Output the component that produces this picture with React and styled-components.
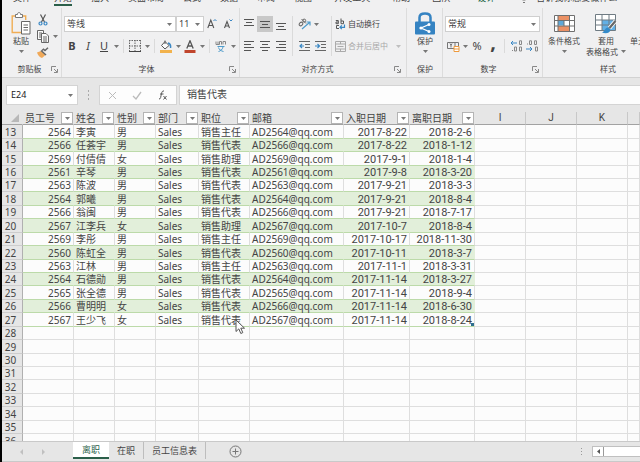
import React from "react";
import styled, { createGlobalStyle } from "styled-components";

const GlobalStyle = createGlobalStyle`
  * { box-sizing: border-box; }
  body {
    margin: 0;
    background: #e6e6e6;
    color: #444;
    font: 9px/12px "Noto Sans", "Noto Sans CJK SC", sans-serif;
  }
  button, input, select {
    font: inherit;
    color: inherit;
    border: 0;
    padding: 0;
    margin: 0;
    background: none;
  }
  svg { display: block; }
`;

const Window = styled.div`
  display: flex;
  flex-direction: column;
  height: 100vh;
  border-left: 2px solid #000;
  overflow: hidden;
`;

/* ---------- ribbon ---------- */

const RibbonTabs = styled.nav`
  display: flex;
  align-items: flex-end;
  gap: 19px;
  height: 6px;
  padding-left: 11px;
  overflow: hidden;
  background: #f0f0f1;
  white-space: nowrap;
`;

const RibbonTab = styled.button`
  display: flex;
  align-items: flex-end;
  gap: 8px;
  flex: none;
  height: 14px;
  line-height: 12px;
  margin-left: ${(p) => p.$space || 0}px;
  border-bottom: 2px solid ${(p) => (p.$active ? "#2b5f4a" : "transparent")};
  color: ${(p) => (p.$accent ? "#2b6b4d" : "#444")};
`;

const Ribbon = styled.div`
  display: flex;
  flex: none;
  height: 72px;
  padding-top: 2px;
  background: #f0f0f1;
  border-bottom: 1px solid #d2d2d2;
  overflow: hidden;
  font-size: 8px;
  white-space: nowrap;
`;

const Group = styled.section`
  display: flex;
  flex: ${(p) => (p.$grow ? "1 0 auto" : "none")};
  flex-direction: column;
  justify-content: space-between;
  padding: 4px ${(p) => p.$right || 2}px 1px ${(p) => p.$left || 1}px;
  border-right: 1px solid #dcdcdc;
`;

const GroupBody = styled.div`
  display: flex;
  gap: ${(p) => p.$gap || 0}px;
`;

const GroupFoot = styled.footer`
  display: flex;
  align-items: center;
  height: 14px;
`;

const GroupLabel = styled.span`
  flex: 1;
  text-align: center;
`;

const Launcher = styled.button`
  width: 8px;
  height: 8px;
`;

const Stack = styled.div`
  display: flex;
  flex-direction: column;
  gap: 6px;
  padding-top: 4px;
`;

const ToolRow = styled.div`
  display: flex;
  align-items: center;
  gap: ${(p) => p.$gap || 0}px;
  height: 16px;
`;

const Tool = styled.button`
  display: flex;
  align-items: center;
  justify-content: center;
  width: 16px;
  height: 16px;
  background: ${(p) => (p.$on ? "#c8c8c8" : "none")};
`;

const LetterTool = styled(Tool)`
  font-size: ${(p) => (p.$large ? 20 : 11)}px;
  line-height: ${(p) => (p.$large ? 4 : 12)}px;
  padding-bottom: ${(p) => (p.$large ? 8 : 0)}px;
  font-weight: ${(p) => (p.$bold ? 700 : 400)};
  font-style: ${(p) => (p.$italic ? "italic" : "normal")};
  text-decoration: ${(p) => (p.$underline ? "underline" : "none")};
`;

const CaretButton = styled.button`
  display: flex;
  align-items: center;
  justify-content: center;
  width: 8px;
  height: 12px;
  opacity: ${(p) => (p.disabled ? 0.4 : 1)};
`;

const Divider = styled.span`
  width: 1px;
  height: ${(p) => (p.$tall ? 40 : 14)}px;
  margin: ${(p) => (p.$tall ? "4px" : "0")} 3px 0;
  background: #dadada;
`;

const TextTool = styled.button`
  display: flex;
  align-items: center;
  gap: 2px;
  height: 16px;
  color: ${(p) => (p.disabled ? "#a8a8a8" : "#444")};
`;

const BigTool = styled.button`
  display: flex;
  flex-direction: column;
  align-items: center;
  width: ${(p) => p.$width}px;
  height: 50px;
  line-height: 11px;
`;

const BigIcon = styled.span`
  display: flex;
  align-items: center;
  height: 23px;
`;

const BigText = styled.span`
  display: flex;
  align-items: center;
  gap: 3px;
  height: 11px;
`;

const SmallTools = styled.div`
  display: flex;
  flex-direction: column;
`;

const SelectBox = styled.span`
  position: relative;
  display: flex;
  flex: ${(p) => (p.$grow ? 1 : "none")};
  width: ${(p) => p.$width}px;
  height: 16px;
  border: 1px solid #cfcfcf;
  background: #fff;
  font-size: 9px;

  select {
    flex: 1;
    width: 100%;
    padding: 0 2px;
    appearance: none;
    outline: none;
  }
  svg {
    position: absolute;
    right: 3px;
    top: 6px;
    pointer-events: none;
  }
`;

/* ---------- formula bar ---------- */

const FormulaBar = styled.div`
  display: flex;
  flex: none;
  height: 34px;
  padding: 7px 0 7px 4px;
  background: #e6e6e6;
`;

const NameBox = styled.label`
  display: flex;
  align-items: center;
  width: 72px;
  padding: 0 4px;
  border: 1px solid #d4d4d4;
  background: #fff;

  input {
    flex: 1;
    min-width: 0;
    outline: none;
    color: #222;
  }
`;

const Grip = styled.span`
  display: flex;
  align-items: center;
  justify-content: center;
  width: 21px;
`;

const FormulaTools = styled.div`
  display: flex;
  align-items: center;
  justify-content: space-around;
  width: 78px;
  margin-right: 2px;
  border: 1px solid #d4d4d4;
  background: #fdfdfd;
`;

const FormulaInput = styled.input`
  flex: 1;
  min-width: 0;
  padding: 0 7px 3px;
  border: 1px solid #d4d4d4;
  border-right: 0;
  background: #fdfdfd;
  font-size: 10px;
  outline: none;
`;

/* ---------- sheet ---------- */

const SheetArea = styled.main`
  flex: 1;
  min-height: 0;
  overflow: hidden;
  background: #fcfcfc;
`;

const Sheet = styled.table`
  width: 100%;
  table-layout: fixed;
  border-collapse: separate;
  border-spacing: 0;
  font-size: 10px;
  line-height: 12px;
  white-space: nowrap;
`;

const Col = styled.col`
  width: ${(p) => p.$width}px;
`;

const HeadCell = styled.th`
  height: 13px;
  padding: 0;
  border-bottom: 1px solid #a2a2a2;
  border-right: 1px solid ${(p) => (p.$letter ? "#c8c8c8" : "#e6e6e6")};
  background: #e6e6e6;
  font-family: ${(p) => (p.$letter ? "Roboto, sans-serif" : "inherit")};
  font-size: 10px;
  font-weight: 400;
`;

const HeadContent = styled.div`
  display: flex;
  align-items: center;
  justify-content: space-between;
  height: 12px;
  padding-left: 2px;
`;

const FilterButton = styled.button`
  display: flex;
  align-items: center;
  justify-content: center;
  flex: none;
  width: 12px;
  height: 12px;
  border: 1px solid #b4b4b4;
  background: #fff;
`;

const SheetBody = styled.tbody`
  tr { height: 13px; }
  tr:nth-child(7n + 1), tr:nth-child(7n + 3), tr:nth-child(7n + 6) { height: 14px; }
`;

const RowHead = styled.th`
  padding: 1px 3px 0 0;
  border-right: 1px solid #b0b0b0;
  border-bottom: 1px solid #cdcdcd;
  background: #e6e6e6;
  font-weight: 400;
  line-height: 11px;
  text-align: center;
`;

const Cell = styled.td`
  position: relative;
  padding: 1px 2px 0;
  border-right: 1px solid ${(p) => (p.$band ? "#e2efda" : "#dedede")};
  border-bottom: 1px solid ${(p) => (p.$data ? "#bcdaa9" : "#dedede")};
  background: ${(p) => (p.$band ? "#e2efda" : "#fcfcfc")};
  font-family: ${(p) => (p.$date ? "Roboto, sans-serif" : "inherit")};
  font-size: ${(p) => (p.$date ? 11 : 10)}px;
  line-height: 11px;
  text-align: ${(p) => (p.$right ? "right" : "left")};
`;

const TableCorner = styled.i`
  position: absolute;
  right: 0;
  bottom: 0;
  width: 3px;
  height: 3px;
  background: #2e6f8e;
`;

const Pointer = styled.svg`
  position: absolute;
  left: 36px;
  top: 6px;
  z-index: 1;
`;

/* ---------- sheet tabs ---------- */

const SheetBar = styled.footer`
  display: flex;
  flex: none;
  height: 21px;
  border-top: 1px solid #c9c9c9;
  border-bottom: 1px solid #c9c9c9;
  background: #e6e6e6;
`;

const SheetNav = styled.div`
  display: flex;
  align-items: center;
  justify-content: space-around;
  width: 71px;
  padding: 0 20px 0 10px;
`;

const SheetTab = styled.button`
  height: 17px;
  padding: 0 ${(p) => (p.$active ? 9 : 8)}px;
  border-right: ${(p) => (p.$active ? 0 : "1px solid #bdbdbd")};
  border-bottom: ${(p) => (p.$active ? "2px solid #2b5f4a" : 0)};
  background: ${(p) => (p.$active ? "#fff" : "none")};
  color: ${(p) => (p.$active ? "#2b5f4a" : "#444")};
`;

const AddSheet = styled.button`
  margin-left: 23px;
`;

const ScrollZone = styled.div`
  display: flex;
  align-items: center;
  gap: 9px;
  margin-left: auto;
`;

const ScrollTrack = styled.div`
  display: flex;
  width: 48px;
  height: 11px;
  border: 1px solid #c0c0c0;
  border-right: 0;
  background: #fff;
`;

const ScrollArrow = styled.button`
  display: flex;
  align-items: center;
  justify-content: center;
  width: 11px;
  border-right: 1px solid #9a9a9a;
`;

/* ---------- icons ---------- */

const Caret = () => (
  <svg width="5" height="3" viewBox="0 0 5 3"><path d="M0 0h5L2.5 3z" fill="#777" /></svg>
);

const LaunchIcon = () => (
  <svg width="7" height="7" viewBox="0 0 7 7" fill="none" stroke="#888">
    <path d="M.5 5V.5H5M3 3l3 3M6.500 3v3.500H3" />
  </svg>
);

const PasteIcon = () => (
  <svg width="20" height="23" viewBox="0 0 20 23" fill="none">
    <path d="M5 4H1.200v16.500H10M12 4h2.700v4" stroke="#efad55" strokeWidth="1.400" />
    <path d="M4.500 5.500v-3h2C6.500 1 7 .6 8 .6s1.500.4 1.500 1.900h2v3z" fill="#fff" stroke="#777" />
    <path d="M10.500 9.500h8.500v12.500h-8.500z" fill="#fff" stroke="#666" />
    <path d="M12.500 13h4.500M12.500 15.500h4.500M12.500 18h4.500" stroke="#666" />
  </svg>
);

const CutIcon = () => (
  <svg width="10" height="12" viewBox="0 0 10 12" fill="none">
    <path d="M2.500.5l4 7.500M7.500.5l-4 7.500" stroke="#555" strokeWidth="1.200" />
    <circle cx="2.500" cy="9.500" r="1.500" stroke="#3a87c4" strokeWidth="1.200" />
    <circle cx="7.500" cy="9.500" r="1.500" stroke="#3a87c4" strokeWidth="1.200" />
  </svg>
);

const CopyIcon = () => (
  <svg width="12" height="13" viewBox="0 0 12 13" fill="#fafafa" stroke="#666">
    <path d="M.5.5h6v9h-6z" /><path d="M2 3h3M2 5h2M2 7h2" />
    <path d="M4.500 3.500h4.500l2.500 2.500v6.500h-7zM6 7h4M6 9h4M6 11h4" />
  </svg>
);

const BrushIcon = () => (
  <svg width="12" height="11" viewBox="0 0 12 11">
    <path d="M0 5.500l4-1.500 4.500 4-3.500 3C2.500 10.300 1 8.300 0 5.500z" fill="#f0a95a" />
    <path d="M5 3.500l1.500-1.300L8 3.500 11 .8" fill="none" stroke="#666" strokeWidth="1.500" />
    <path d="M4 3.500l5 4.500" stroke="#666" strokeWidth="1.500" />
  </svg>
);

const GrowIcon = ({ down }) => (
  <svg width="11" height="12" viewBox="0 0 11 12" fill="none">
    <path d={down ? "M1.500 10l2.500-6.500 2.500 6.500M2.300 8h3.500" : "M.8 10l3-8 3 8M1.800 7.500h4"} stroke="#555" strokeWidth="1.100" />
    <path d={down ? "M6.500 1.500l1.500 1.500 1.500-1.500" : "M6.500 3l1.500-1.500L9.500 3"} stroke="#3a87c4" />
  </svg>
);

const BorderIcon = () => (
  <svg width="12" height="12" viewBox="0 0 12 12" fill="none" stroke="#666">
    <path d="M.5 0v11M11.500 0v11M6 0v11M0 .5h12M0 6h12" strokeDasharray="1.500 1" />
    <path d="M0 11.500h12" stroke="#444" />
  </svg>
);

const FillIcon = () => (
  <svg width="12" height="13" viewBox="0 0 12 13" fill="none">
    <path d="M5 1.500l4 4-4 3.500-3.500-3.500z" fill="#fafafa" stroke="#555" />
    <path d="M5 4V.5" stroke="#555" />
    <path d="M8 3c2 .5 3 2 2.500 5" stroke="#3a87c4" strokeWidth="1.500" />
    <path d="M0 10h12v3H0z" fill="#f2b24c" />
  </svg>
);

const FontColorIcon = () => (
  <svg width="12" height="13" viewBox="0 0 12 13" fill="none">
    <path d="M2.800 8.500L6 .8l3.200 7.700M4 6h4" stroke="#555" strokeWidth="1.300" />
    <path d="M.5 10h11v3H.5z" fill="#c0452c" />
  </svg>
);

const PhoneticIcon = () => (
  <svg width="12" height="12" viewBox="0 0 12 12" fill="none">
    <path d="M1 1.500v3h2v-3M3 4.500h1.500v-3h2v3M8 4.500v-3h2.500v3" stroke="#888" />
    <path d="M2.500 6.500h7M3.500 11.500c2-.5 4-2 4.500-4.500M3.500 7.500c.5 2 2.500 3.500 5 4" stroke="#4f9ccb" />
  </svg>
);

const alignments = {
  top: "M0 1.500h10M2 4.500h6M0 7.500h10",
  middle: "M0 3.500h10M2 6.500h6M0 9.500h10",
  bottom: "M0 5.500h10M2 8.500h6M0 11.500h10",
  left: "M0 1.500h10M0 4.500h7M0 7.500h10M0 10.500h7",
  center: "M0 1.500h10M2 4.500h6M0 7.500h10M2 10.500h6",
  right: "M0 1.500h10M3 4.500h7M0 7.500h10M3 10.500h7",
};

const AlignIcon = ({ kind }) => (
  <svg width="10" height="12" viewBox="0 0 10 12" fill="none" stroke="#555"><path d={alignments[kind]} /></svg>
);

const OrientationIcon = () => (
  <svg width="13" height="12" viewBox="0 0 13 12" fill="none">
    <ellipse cx="3" cy="6" rx="2" ry="1.500" stroke="#666" transform="rotate(-45 3 6)" />
    <path d="M3.500 1l4.500 4.500" stroke="#666" /><circle cx="6.200" cy="2.600" r="1.500" stroke="#666" />
    <path d="M4 11l7.500-6.500M8.500 4H12v3.500" stroke="#4f9ccb" strokeWidth="1.200" />
  </svg>
);

const IndentIcon = ({ more }) => (
  <svg width="11" height="12" viewBox="0 0 11 12" fill="none">
    <path d="M0 1.500h11M6 4.500h5M6 7.500h5M0 10.500h11" stroke="#666" />
    <path d={more ? "M0 6h4M2.500 4l2 2-2 2" : "M5 6H1M3 4L1 6l2 2"} stroke="#3a87c4" strokeWidth="1.200" />
  </svg>
);

const WrapIcon = () => (
  <svg width="11" height="12" viewBox="0 0 11 12" fill="none" stroke="#555">
    <path d="M.8 2.500h2.500v3.200H1V4h2.300M6 .5v5.200h2.500V3H6M4 7.500H1.500v3H4" />
    <path d="M9.500 6.500v2.800H5M6.800 7.300L5 9.300l1.800 1.900" stroke="#3a87c4" strokeWidth="1.200" />
  </svg>
);

const MergeIcon = () => (
  <svg width="11" height="11" viewBox="0 0 11 11" fill="none" stroke="#aaa">
    <path d="M.5.5h10v10H.5zM.5 3h10M.5 8h10M5.500.5V3M5.500 8v2.500M2.500 5.500h6" />
  </svg>
);

const LockIcon = () => (
  <svg width="20" height="23" viewBox="0 0 20 23" fill="none">
    <path d="M4.500 10V5.500C4.500 3 6.500 1.500 10 1.500s5.500 1.500 5.500 4V10" stroke="#3583c2" strokeWidth="2.500" />
    <rect y="9.500" width="20" height="13" rx="1" fill="#3583c2" />
    <path d="M14 12.500l-8 3.500 8 3.500" stroke="#fff" strokeWidth="1.300" />
    <circle cx="14" cy="12.500" r="1.500" fill="#fff" /><circle cx="6" cy="16" r="1.600" fill="#fff" /><circle cx="14" cy="19.500" r="1.500" fill="#fff" />
  </svg>
);

const CurrencyIcon = () => (
  <svg width="13" height="12" viewBox="0 0 13 12" fill="none">
    <path d="M.5 2.500h11v6H.5z" stroke="#777" /><path d="M3 3.500l1 2 1-2M4 5.500v2M7 4h2M7 6h2" stroke="#777" />
    <path d="M7 6.500h5v5H7zM7 9h5" fill="#fff" stroke="#ee9a3d" />
  </svg>
);

const DecimalIcon = ({ less }) => (
  <svg width="13" height="12" viewBox="0 0 13 12" fill="none" stroke="#888">
    {less ? (
      <g><path d="M3.500.8h2v3.700h-2zM8.500.8h2v3.700h-2zM9.500 7h2v4h-2zM1 4h1" /><path d="M0 9h6M4 7l2 2-2 2" stroke="#3a87c4" /></g>
    ) : (
      <g><path d="M9.500.8h2v3.700h-2zM4.500 7h2v4h-2zM9.500 7h2v4h-2zM2 10.500h1" /><path d="M7 3H1M3 1L1 3l2 2" stroke="#3a87c4" /></g>
    )}
  </svg>
);

const ConditionalIcon = () => (
  <svg width="21" height="17" viewBox="0 0 21 17" fill="none">
    <path d="M.5.5h20v16H.5z" fill="#fff" />
    <path d="M4 .5h11v5H4zM4 11h12v5.500H4z" fill="#eb9165" />
    <path d="M4 6h6v4.500H4z" fill="#5ea8d8" />
    <path d="M.5.5h20v16H.5zM.5 5.500h20M.5 11h20M4 .5v16M10 5.500V11M15.500.5v16" stroke="#6f6f6f" />
  </svg>
);

const TableFormatIcon = () => (
  <svg width="22" height="20" viewBox="0 0 22 20" fill="none">
    <path d="M.5.5h20v16H.5z" fill="#fff" /><path d="M7 6h13.500v10.500H7z" fill="#62b0e6" />
    <path d="M.5.5h20v16H.5zM.5 6h20M.5 11h20M7 .5v16M14 .5v16" stroke="#6f7b83" />
    <path d="M20.500 7l-6 7" stroke="#fff" strokeWidth="4" /><path d="M20.500 7l-6 7" stroke="#666" strokeWidth="2.200" />
    <path d="M7 18.500c3-1 2.500-4.500 6-5l2.500 2.500c-1 3.500-5 4-8.500 2.500z" fill="#348ac9" />
  </svg>
);

const BulbIcon = () => (
  <svg width="8" height="12" viewBox="0 0 8 12" fill="none" stroke="#777">
    <path d="M2.500 8C0 5 1 1 4 1s4 4 1.500 7zM3 10.500h2" />
  </svg>
);

/* ---------- data ---------- */

const ribbonTabs = ["文件", "开始", "插入", "页面布局", "公式", "数据", "审阅", "视图", "开发工具", "帮助", "团队"];

const columns = [
  { title: "员工号", width: 51 },
  { title: "姓名", width: 41 },
  { title: "性别", width: 41 },
  { title: "部门", width: 43 },
  { title: "职位", width: 51 },
  { title: "邮箱", width: 94 },
  { title: "入职日期", width: 66 },
  { title: "离职日期", width: 65 },
];

const blankColumns = ["I", "J", "K", ""];

const staff = [
  [2564, "李寅", "男", "销售主任", "2017-8-22", "2018-2-6"],
  [2566, "任荟宇", "男", "销售代表", "2017-8-22", "2018-1-12"],
  [2569, "付倩倩", "女", "销售助理", "2017-9-1", "2018-1-4"],
  [2561, "辛琴", "男", "销售代表", "2017-9-8", "2018-3-20"],
  [2563, "陈波", "男", "销售代表", "2017-9-21", "2018-3-3"],
  [2564, "郭曦", "男", "销售代表", "2017-9-21", "2018-8-4"],
  [2566, "翁闽", "男", "销售代表", "2017-9-21", "2018-7-17"],
  [2567, "江李兵", "女", "销售助理", "2017-10-7", "2018-8-4"],
  [2569, "李彤", "男", "销售主任", "2017-10-17", "2018-11-30"],
  [2560, "陈虹全", "男", "销售代表", "2017-10-11", "2018-3-7"],
  [2563, "江林", "男", "销售主任", "2017-11-1", "2018-3-31"],
  [2564, "石德勋", "男", "销售代表", "2017-11-14", "2018-3-27"],
  [2565, "张全德", "男", "销售代表", "2017-11-14", "2018-9-4"],
  [2566, "曹明明", "女", "销售代表", "2017-11-14", "2018-6-30"],
  [2567, "王少飞", "女", "销售代表", "2017-11-14", "2018-8-24"],
];

const firstRow = 13;
const blankRows = [28, 29, 30, 31, 32, 33, 34, 35, 36];

/* ---------- parts ---------- */

const Drop = ({ label, disabled }) => <CaretButton aria-label={label} disabled={disabled}><Caret /></CaretButton>;

const Foot = ({ label, launcher }) => (
  <GroupFoot>
    <GroupLabel>{label}</GroupLabel>
    {launcher && <Launcher aria-label={`${label}设置`}><LaunchIcon /></Launcher>}
  </GroupFoot>
);

const Combo = ({ label, value, width, grow }) => (
  <SelectBox $width={width} $grow={grow}>
    <select aria-label={label} defaultValue={value}><option>{value}</option></select>
    <Caret />
  </SelectBox>
);

const StaffRow = ({ person, number, banded, last }) => {
  const [id, name, sex, job, hired, left] = person;
  const cell = { $data: true, $band: banded };
  return (
    <tr>
      <RowHead scope="row">{number}</RowHead>
      <Cell {...cell} $right>{id}</Cell>
      <Cell {...cell}>{name}</Cell>
      <Cell {...cell}>{sex}</Cell>
      <Cell {...cell}>Sales</Cell>
      <Cell {...cell}>
        {job}
        {last && (
          <Pointer width="11" height="16" viewBox="0 0 11 16" aria-hidden="true">
            <path d="M1 1v11.500l2.800-2.600 2 4.600 2-.9-2-4.400h3.700z" fill="#fff" stroke="#555" />
          </Pointer>
        )}
      </Cell>
      <Cell {...cell}>{`AD${id}@qq.com`}</Cell>
      <Cell {...cell} $right $date>{hired}</Cell>
      <Cell {...cell} $right $date>{left}{last && <TableCorner />}</Cell>
      {blankColumns.map((c) => <Cell key={c} />)}
    </tr>
  );
};

export default function App() {
  return (
    <Window>
      <GlobalStyle />
      <RibbonTabs aria-label="功能区">
        {ribbonTabs.map((tab, i) => (
          <RibbonTab key={tab} $active={i === 1} $space={i === 1 ? 4 : i > 7 ? 3 : 0}>{tab}</RibbonTab>
        ))}
        <RibbonTab $accent $space={8}>设计</RibbonTab>
        <RibbonTab $space={6}><BulbIcon />告诉我你想要做什么</RibbonTab>
      </RibbonTabs>

      <Ribbon>
        <Group $left={6}>
          <GroupBody $gap={1}>
            <BigTool $width={26}>
              <BigIcon><PasteIcon /></BigIcon>
              <BigText>粘贴</BigText>
              <BigText><Caret /></BigText>
            </BigTool>
            <SmallTools>
              <Tool aria-label="剪切"><CutIcon /></Tool>
              <ToolRow><Tool aria-label="复制"><CopyIcon /></Tool><Drop label="复制选项" /></ToolRow>
              <Tool aria-label="格式刷"><BrushIcon /></Tool>
            </SmallTools>
          </GroupBody>
          <Foot label="剪贴板" launcher />
        </Group>

        <Group $left={2}>
          <Stack>
            <ToolRow>
              <Combo label="字体" value="等线" width={112} />
              <Combo label="字号" value="11" width={28} />
              <Tool aria-label="增大字号"><GrowIcon /></Tool>
              <Tool aria-label="减小字号"><GrowIcon down /></Tool>
            </ToolRow>
            <ToolRow>
              <LetterTool $bold>B</LetterTool>
              <LetterTool $italic>I</LetterTool>
              <LetterTool $underline>U</LetterTool>
              <Drop label="下划线选项" />
              <Divider />
              <Tool aria-label="边框"><BorderIcon /></Tool>
              <Drop label="边框选项" />
              <Divider />
              <Tool aria-label="填充颜色"><FillIcon /></Tool>
              <Drop label="填充颜色选项" />
              <Tool aria-label="字体颜色"><FontColorIcon /></Tool>
              <Drop label="字体颜色选项" />
              <Divider />
              <Tool aria-label="拼音"><PhoneticIcon /></Tool>
              <Drop label="拼音选项" />
            </ToolRow>
          </Stack>
          <Foot label="字体" launcher />
        </Group>

        <Group $right={4}>
          <GroupBody>
            <Stack>
              <ToolRow>
                <Tool aria-label="顶端对齐"><AlignIcon kind="top" /></Tool>
                <Tool aria-label="垂直居中" $on><AlignIcon kind="middle" /></Tool>
                <Tool aria-label="底端对齐"><AlignIcon kind="bottom" /></Tool>
              </ToolRow>
              <ToolRow>
                <Tool aria-label="左对齐"><AlignIcon kind="left" /></Tool>
                <Tool aria-label="居中"><AlignIcon kind="center" /></Tool>
                <Tool aria-label="右对齐"><AlignIcon kind="right" /></Tool>
              </ToolRow>
            </Stack>
            <Divider $tall />
            <Stack>
              <ToolRow><Tool aria-label="方向"><OrientationIcon /></Tool><Drop label="方向选项" /></ToolRow>
              <ToolRow>
                <Tool aria-label="减少缩进量"><IndentIcon /></Tool>
                <Tool aria-label="增加缩进量"><IndentIcon more /></Tool>
              </ToolRow>
            </Stack>
            <Divider $tall />
            <Stack>
              <TextTool><WrapIcon />自动换行</TextTool>
              <ToolRow $gap={6}>
                <TextTool disabled><MergeIcon />合并后居中</TextTool>
                <Drop label="合并选项" disabled />
              </ToolRow>
            </Stack>
          </GroupBody>
          <Foot label="对齐方式" launcher />
        </Group>

        <Group $left={3}>
          <BigTool $width={30}>
            <BigIcon><LockIcon /></BigIcon>
            <BigText>保护</BigText>
            <BigText><Caret /></BigText>
          </BigTool>
          <Foot label="保护" />
        </Group>

        <Group $left={2}>
          <Stack>
            <ToolRow><Combo label="数字格式" value="常规" grow /></ToolRow>
            <ToolRow>
              <Tool aria-label="会计数字格式"><CurrencyIcon /></Tool>
              <Drop label="货币选项" />
              <LetterTool>%</LetterTool>
              <LetterTool $bold $large>,</LetterTool>
              <Divider />
              <Tool aria-label="增加小数位数"><DecimalIcon /></Tool>
              <Tool aria-label="减少小数位数"><DecimalIcon less /></Tool>
            </ToolRow>
          </Stack>
          <Foot label="数字" launcher />
        </Group>

        <Group $grow $left={2}>
          <GroupBody $gap={2}>
            <BigTool $width={38}>
              <BigIcon><ConditionalIcon /></BigIcon>
              <BigText>条件格式</BigText>
              <BigText><Caret /></BigText>
            </BigTool>
            <BigTool $width={42}>
              <BigIcon><TableFormatIcon /></BigIcon>
              <BigText>套用</BigText>
              <BigText>表格格式<Caret /></BigText>
            </BigTool>
            <BigTool $width={42}>
              <BigIcon />
              <BigText>单元格样式</BigText>
            </BigTool>
          </GroupBody>
          <Foot label="样式" />
        </Group>
      </Ribbon>

      <FormulaBar>
        <NameBox>
          <input aria-label="名称框" defaultValue="E24" />
          <Caret />
        </NameBox>
        <Grip>
          <svg width="2" height="10" viewBox="0 0 2 10" fill="#aaa"><path d="M0 0h1v2H0zM0 4h1v2H0zM0 8h1v2H0z" /></svg>
        </Grip>
        <FormulaTools>
          <button aria-label="取消">
            <svg width="9" height="9" viewBox="0 0 9 9" stroke="#bbb" fill="none"><path d="M1 1l7 7M8 1L1 8" /></svg>
          </button>
          <button aria-label="输入">
            <svg width="10" height="9" viewBox="0 0 10 9" stroke="#bbb" fill="none" strokeWidth="1.300"><path d="M1 5l3 3 5-7" /></svg>
          </button>
          <button aria-label="插入函数">
            <svg width="10" height="10" viewBox="0 0 10 10" stroke="#555" fill="none">
              <path d="M1 9c2 0 1.500-2 2.500-5.500C4 1.500 4.500.8 6 1M2 4h3.500M5.500 6l3 3.500M8.500 6l-3 3.500" />
            </svg>
          </button>
        </FormulaTools>
        <FormulaInput aria-label="编辑栏" defaultValue="销售代表" />
      </FormulaBar>

      <SheetArea>
        <Sheet>
          <colgroup>
            <Col $width={21} />
            {columns.map((c) => <Col key={c.title} $width={c.width} />)}
            <Col $width={51} /><Col $width={51} /><Col $width={51} /><col />
          </colgroup>
          <thead>
            <tr>
              <HeadCell aria-label="全选">
                <svg width="18" height="10" viewBox="0 0 18 10"><path d="M17 1v8H9z" fill="#b8b8b8" /></svg>
              </HeadCell>
              {columns.map((c) => (
                <HeadCell key={c.title} scope="col">
                  <HeadContent>
                    {c.title}
                    <FilterButton aria-label={`筛选${c.title}`}><Caret /></FilterButton>
                  </HeadContent>
                </HeadCell>
              ))}
              {blankColumns.map((c) => <HeadCell key={c} scope="col" $letter>{c}</HeadCell>)}
            </tr>
          </thead>
          <SheetBody>
            {staff.map((person, i) => (
              <StaffRow key={i} person={person} number={firstRow + i} banded={i % 2 === 1} last={i === staff.length - 1} />
            ))}
            {blankRows.map((n) => (
              <tr key={n}>
                <RowHead scope="row">{n}</RowHead>
                {[...columns, ...blankColumns].map((_, i) => <Cell key={i} />)}
              </tr>
            ))}
          </SheetBody>
        </Sheet>
      </SheetArea>

      <SheetBar>
        <SheetNav>
          <button aria-label="上一个"><svg width="4" height="6" viewBox="0 0 4 6"><path d="M3 0v6L0 3z" fill="#c0c0c0" /></svg></button>
          <button aria-label="下一个"><svg width="4" height="6" viewBox="0 0 4 6"><path d="M1 0v6l3-3z" fill="#c0c0c0" /></svg></button>
        </SheetNav>
        <SheetTab $active>离职</SheetTab>
        <SheetTab>在职</SheetTab>
        <SheetTab>员工信息表</SheetTab>
        <AddSheet aria-label="新工作表">
          <svg width="13" height="13" viewBox="0 0 13 13" fill="none" stroke="#777"><circle cx="6.500" cy="6.500" r="5.500" /><path d="M6.500 3.500v6M3.500 6.500h6" /></svg>
        </AddSheet>
        <ScrollZone>
          <svg width="2" height="8" viewBox="0 0 2 8" fill="#999"><path d="M0 0h1v1H0zM0 3h1v1H0zM0 6h1v1H0z" /></svg>
          <ScrollTrack>
            <ScrollArrow aria-label="向左滚动"><svg width="3" height="5" viewBox="0 0 3 5"><path d="M3 0v5L0 2.500z" fill="#555" /></svg></ScrollArrow>
          </ScrollTrack>
        </ScrollZone>
      </SheetBar>
    </Window>
  );
}
